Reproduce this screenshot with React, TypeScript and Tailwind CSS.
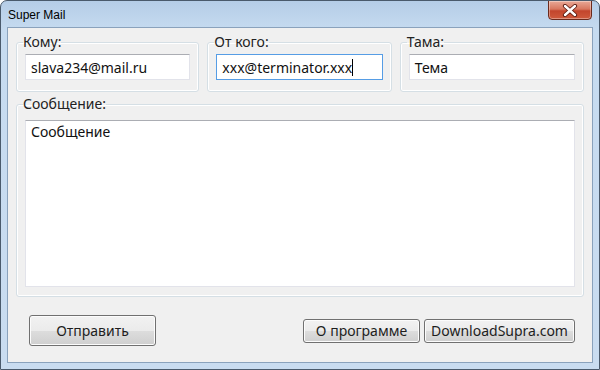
import React from 'react';

const ui = { fontFamily: '"Noto Sans", "Open Sans", sans-serif' };

function GroupBox({
    label,
    className,
    children,
}: {
    label: string;
    className?: string;
    children: React.ReactNode;
}) {
    return (
        <fieldset
            className={
                'border border-[#d5dfe5] rounded-[3px] shadow-[inset_0_0_0_1px_#ffffff] px-[8px] ' +
                (className ?? '')
            }
        >
            <legend className="px-0 ml-[-2px] text-[14px] leading-[20px] text-[#222222]">
                {label}
            </legend>
            {children}
        </fieldset>
    );
}

function TextBox({ value, focused }: { value: string; focused?: boolean }) {
    return (
        <div
            className={
                'h-[26px] mt-[2px] bg-white flex items-center px-[5px] text-[14px] text-[#111111] border ' +
                (focused
                    ? 'border-[#569de5]'
                    : 'border-[#e2e3ea] border-t-[#abadb3]')
            }
        >
            <span>{value}</span>
            {focused && <span className="inline-block w-px h-[17px] bg-black" />}
        </div>
    );
}

function Button({ label, className }: { label: string; className?: string }) {
    return (
        <button
            className={
                'rounded-[3px] border border-[#707070] text-[14px] text-[#1e1e1e] bg-[linear-gradient(#f2f2f2_0%,#ebebeb_50%,#dddddd_51%,#cfcfcf_100%)] shadow-[inset_0_0_0_1px_#fcfcfc] flex items-center justify-center ' +
                (className ?? '')
            }
        >
            {label}
        </button>
    );
}

export default function App() {
    return (
        <div
            className="w-[600px] h-[370px] rounded-t-[7px] border border-[#4a5a6c] bg-[linear-gradient(#b5cde7_0%,#c6dbf0_8%,#c9dcf0_100%)] flex flex-col overflow-hidden"
            style={ui}
        >
            <div className="h-[26px] flex items-start justify-between shrink-0">
                <span
                    className="ml-[7px] mt-[6px] text-[12px] leading-[16px] text-black"
                    style={{ fontFamily: '"Liberation Sans", Arial, sans-serif' }}
                >
                    Super Mail
                </span>
                <div className="mr-[7px] mt-[-1px] w-[44px] h-[20px] rounded-b-[4px] border border-[#6b2a1c] bg-[linear-gradient(#e9a997_0%,#d8775f_45%,#c3452c_55%,#cf5a3c_100%)] shadow-[inset_0_0_0_1px_rgba(255,255,255,0.35)] flex items-center justify-center">
                    <svg width="16" height="13" viewBox="0 0 16 13">
                        <path
                            d="M3 2 L13 11 M13 2 L3 11"
                            stroke="#5a1a10"
                            strokeWidth="4.2"
                            strokeLinecap="round"
                        />
                        <path
                            d="M3 2 L13 11 M13 2 L3 11"
                            stroke="#ffffff"
                            strokeWidth="2.4"
                            strokeLinecap="round"
                        />
                    </svg>
                </div>
            </div>

            <div className="mx-[6px] h-[336px] border border-[#8aa2bc] bg-[#f0f0f0] px-[8px] pt-[4px] flex flex-col">
                <div className="flex gap-[8px]">
                    <GroupBox label="Кому:" className="w-[184px] pb-[11px]">
                        <TextBox value="slava234@mail.ru" />
                    </GroupBox>
                    <GroupBox label="От кого:" className="w-[185px] pb-[11px]">
                        <TextBox value="xxx@terminator.xxx" focused />
                    </GroupBox>
                    <GroupBox label="Тама:" className="w-[185px] pb-[11px]">
                        <TextBox value="Тема" />
                    </GroupBox>
                </div>

                <GroupBox label="Сообщение:" className="mt-[2px] pb-[9px]">
                    <div className="mt-[6px] h-[167px] bg-white border border-[#e2e3ea] border-t-[#abadb3] px-[5px] pt-0 text-[14px] text-[#111111]">
                        Сообщение
                    </div>
                </GroupBox>

                <div className="mt-[18px] flex items-center">
                    <Button label="Отправить" className="ml-[13px] w-[127px] h-[31px]" />
                    <div className="ml-auto mr-[9px] flex gap-[4px]">
                        <Button label="О программе" className="w-[117px] h-[24px]" />
                        <Button label="DownloadSupra.com" className="w-[151px] h-[24px]" />
                    </div>
                </div>
            </div>
        </div>
    );
}
